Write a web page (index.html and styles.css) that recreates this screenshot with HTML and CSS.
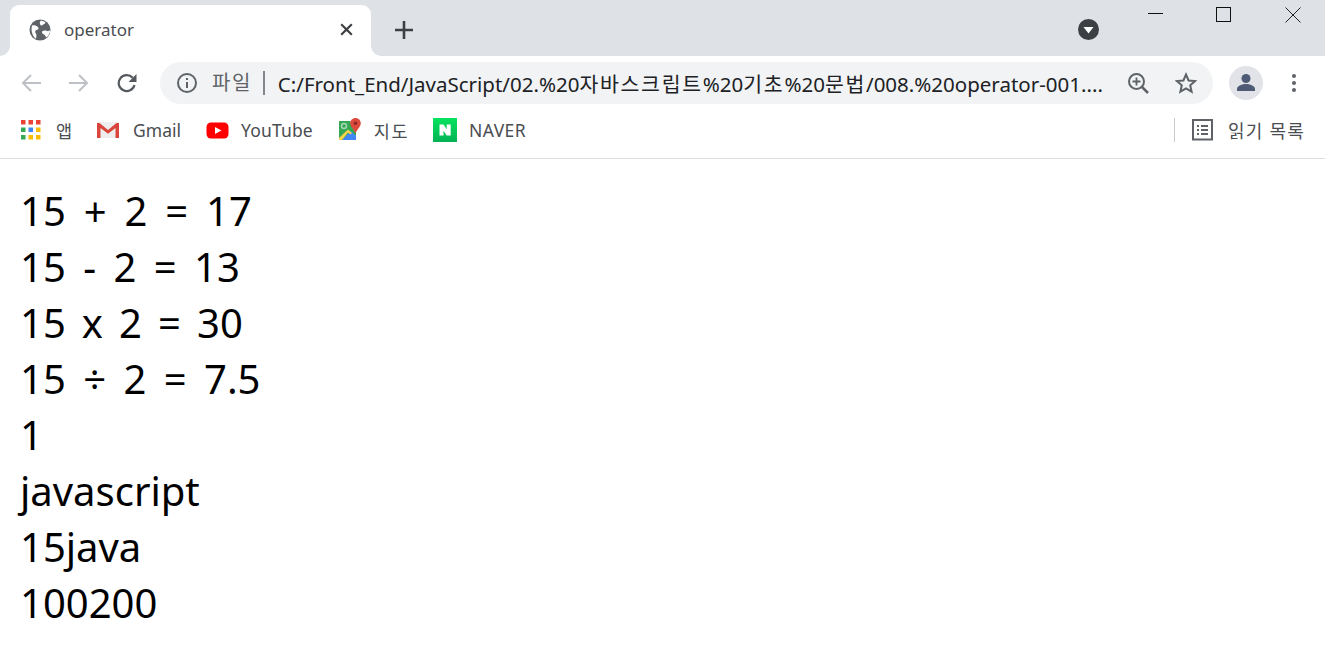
FILE: index.html
```html
<!DOCTYPE html>
<html lang="ko">
<head>
<meta charset="utf-8">
<title>operator</title>
<link rel="stylesheet" href="styles.css">
</head>
<body>
<header class="chrome">
  <div class="tabstrip">
    <div class="tab">
      <svg class="favicon" viewBox="0 0 22 22" width="22" height="22"><circle cx="11" cy="11" r="10.5" fill="#5f6368"/><path d="M3 6.500c2-.5 3.500-.5 4.500.5.800.8 1.600.8 2 2 .3 1-.5 1.500-1.500 1.800-1.500.4-2 1.200-1.700 2.500.2 1 1 1.500 1.200 3l-.5 3.500C4 18 1.500 12 3 6.500zM12 1.500c2 .5 3 1 4.500 2-.5 1.500-2 1.500-3 2.500s-2 .5-2.500-1 0-2.500 1-3.500zM13 12.500c1.500-1.200 3.500-1 5-.5 1 .4 2.500 0 3-1 .3 3-1.500 6-3.500 7.500-1-1-1.500-2.500-2.500-3-1-.4-2.500-1.500-2-3z" fill="#fff"/></svg>
      <span class="tab-title">operator</span>
      <svg class="tab-close" viewBox="0 0 13 13" width="13" height="13"><path d="M1.200 1.200l10.600 10.600M11.800 1.200L1.200 11.800" stroke="#3c4043" stroke-width="2.200" fill="none"/></svg>
    </div>
    <svg class="newtab" viewBox="0 0 18 18" width="18" height="18"><path d="M9 0v18M0 9h18" stroke="#3c4043" stroke-width="2.600" fill="none"/></svg>
    <div class="strip-space"></div>
    <svg class="tabsearch" viewBox="0 0 21 21" width="21" height="21"><circle cx="10.500" cy="10.500" r="10.500" fill="#3c4043"/><path d="M5.500 8h10l-5 6.500z" fill="#fff"/></svg>
    <div class="winctl">
      <svg class="win-min" viewBox="0 0 15 15" width="15" height="15"><path d="M0 6.500h15" stroke="#111" stroke-width="1" fill="none"/></svg>
      <svg class="win-max" viewBox="0 0 15 15" width="15" height="15"><rect x=".5" y=".5" width="14" height="14" stroke="#111" fill="none"/></svg>
      <svg class="win-close" viewBox="0 0 16 16" width="16" height="16"><path d="M.5.500l15 15M15.500.500l-15 15" stroke="#222" stroke-width="1" fill="none"/></svg>
    </div>
  </div>
  <div class="toolbar">
    <svg class="nav nav-back" viewBox="0 0 20 18" width="20" height="18"><path d="M20 9H2M10 1L2 9l8 8" stroke="#bdc1c6" stroke-width="2" fill="none"/></svg>
    <svg class="nav nav-fwd" viewBox="0 0 20 18" width="20" height="18"><path d="M0 9h18M10 1l8 8-8 8" stroke="#bdc1c6" stroke-width="2" fill="none"/></svg>
    <svg class="nav nav-reload" viewBox="0 0 20 20" width="20" height="20"><path d="M17.500 12a8 8 0 1 1-1.800-7.200" stroke="#55585c" stroke-width="2.200" fill="none"/><path d="M19.500 1v8h-8z" fill="#55585c"/></svg>
    <div class="omnibox">
      <svg class="info" viewBox="0 0 20 20" width="20" height="20"><circle cx="10" cy="10" r="9" stroke="#5f6368" stroke-width="2" fill="none"/><path d="M9 9h2v6H9zM9 5h2v2H9z" fill="#5f6368"/></svg>
      <span class="scheme">파일</span>
      <span class="sep"></span>
      <span class="url">C:/Front_End/JavaScript/02.%20<span class="kr">자바스크립트</span>%20<span class="kr">기초</span>%20<span class="kr">문법</span>/008.%20operator-001....</span>
      <svg class="zoom-ic" viewBox="0 0 21 21" width="21" height="21"><circle cx="8.500" cy="8.500" r="7.500" stroke="#5f6368" stroke-width="2" fill="none"/><path d="M14 14l6 6" stroke="#5f6368" stroke-width="2.500"/><path d="M8.500 4.500v8M4.500 8.500h8" stroke="#5f6368" stroke-width="1.800"/></svg>
      <svg class="star" viewBox="0 0 22 22" width="22" height="22"><path d="M11 2.500l2.600 6 6.400.6-4.800 4.200 1.400 6.300L11 16.300l-5.600 3.300 1.400-6.300L2 9.100l6.400-.6z" stroke="#5f6368" stroke-width="2" stroke-linejoin="miter" fill="none"/></svg>
    </div>
    <svg class="avatar" viewBox="0 0 34 34" width="34" height="34"><circle cx="17" cy="17" r="17" fill="#e1e3e8"/><circle cx="17" cy="12.500" r="4.500" fill="#4f5b75"/><path d="M8 25v-2c0-3.500 5.500-5 9-5s9 1.500 9 5v2z" fill="#4f5b75"/></svg>
    <svg class="menu" viewBox="0 0 4 18" width="4" height="18"><circle cx="2" cy="2" r="2" fill="#5f6368"/><circle cx="2" cy="9" r="2" fill="#5f6368"/><circle cx="2" cy="16" r="2" fill="#5f6368"/></svg>
  </div>
  <nav class="bookmarks">
    <a class="bm bm-apps">
      <svg viewBox="0 0 20 20" width="20" height="20"><g><rect x="0" y="0" width="4.500" height="4.500" fill="#ea4335"/><rect x="7.500" y="0" width="4.500" height="4.500" fill="#ea4335"/><rect x="15" y="0" width="4.500" height="4.500" fill="#ea4335"/><rect x="0" y="7.500" width="4.500" height="4.500" fill="#34a853"/><rect x="7.500" y="7.500" width="4.500" height="4.500" fill="#4285f4"/><rect x="15" y="7.500" width="4.500" height="4.500" fill="#fbbc05"/><rect x="0" y="15" width="4.500" height="4.500" fill="#34a853"/><rect x="7.500" y="15" width="4.500" height="4.500" fill="#fbbc05"/><rect x="15" y="15" width="4.500" height="4.500" fill="#fbbc05"/></g></svg>
      <span>앱</span>
    </a>
    <a class="bm bm-gmail">
      <svg viewBox="0 0 24 18" width="24" height="18"><rect x="1" y="1" width="22" height="16" fill="#eeeeee"/><path d="M1 17V2h2.500L12 9l8.500-7H23v15h-3.500V7L12 12.800 4.500 7v10z" fill="#d9453a"/></svg>
      <span>Gmail</span>
    </a>
    <a class="bm bm-yt">
      <svg viewBox="0 0 23 17" width="23" height="17"><rect width="22" height="16" x=".5" y=".5" rx="4.500" fill="#f00"/><path d="M9 5l6.500 3.500L9 12z" fill="#fff"/></svg>
      <span>YouTube</span>
    </a>
    <a class="bm bm-maps">
      <svg viewBox="0 0 22 24" width="22" height="24"><path d="M0 3h17v19H0z" fill="#34a853"/><path d="M11 3h6v12z" fill="#d9dcdc"/><circle cx="5" cy="8" r="2.500" fill="none" stroke="#a8d5b5" stroke-width="1.500"/><path d="M3 22l9-9 5 5v4z" fill="#4285f4"/><path d="M0 22v-2l9-8.500 4 3.500-1.500 1.500L9 14.500 3 22z" fill="#fbd34a"/><path d="M16.500 0c3 0 5.300 2.300 5.300 5.200 0 3.300-3.300 5.300-5.300 10.300-2-5-5.300-7-5.300-10.300 0-2.900 2.300-5.200 5.300-5.200z" fill="#dd4b3e"/><circle cx="16.500" cy="5.200" r="1.800" fill="#8d2a22"/></svg>
      <span>지도</span>
    </a>
    <a class="bm bm-naver">
      <svg viewBox="0 0 24 24" width="24" height="24"><defs><linearGradient id="ng" x1="0" y1="0" x2="0" y2="1"><stop offset="0" stop-color="#06e35f"/><stop offset="1" stop-color="#02b354"/></linearGradient></defs><rect width="24" height="24" fill="url(#ng)"/><path d="M6.500 6.500h4l3.200 4.800V6.500h4v11h-4l-3.200-4.800v4.800h-4z" fill="#fff"/></svg>
      <span>NAVER</span>
    </a>
    <div class="bm-space"></div>
    <span class="bm-sep"></span>
    <a class="bm bm-reading">
      <svg viewBox="0 0 22 22" width="22" height="22"><rect x="1" y="1" width="19" height="19.500" stroke="#5f6368" stroke-width="2" fill="none"/><path d="M5 6h2v2H5zM9 6h7v2H9zM5 10h2v2H5zM9 10h7v2H9zM5 14h2v2H5zM9 14h7v2H9z" fill="#5f6368"/></svg>
      <span>읽기 목록</span>
    </a>
  </nav>
</header>
<main class="output">
  <div class="line ws-plus">15 + 2 = 17</div>
  <div class="line ws-minus">15 - 2 = 13</div>
  <div class="line ws-times">15 x 2 = 30</div>
  <div class="line ws-div">15 ÷ 2 = 7.5</div>
  <div class="line">1</div>
  <div class="line">javascript</div>
  <div class="line">15java</div>
  <div class="line">100200</div>
</main>
</body>
</html>
```
FILE: styles.css
```css
* { box-sizing: border-box; }
html, body { margin: 0; padding: 0; background: #fff; overflow: hidden; }
body { font-family: "Noto Sans", "Noto Sans CJK KR", sans-serif; height: 668px; }
svg { display: block; flex: none; }

.chrome { height: 159px; border-bottom: 1px solid #dadce0; }

.tabstrip { height: 56px; background: #dee1e6; display: flex; align-items: flex-start; padding-left: 10px; }
.tab { position: relative; width: 361px; height: 51px; margin-top: 5px; background: #fff; border-radius: 9px 9px 0 0; display: flex; align-items: center; padding: 0 18px 2px 19px; }
.tab::before, .tab::after { content: ""; position: absolute; bottom: 0; width: 10px; height: 10px; background: radial-gradient(circle at var(--cx) 0, #dee1e6 9.500px, #fff 10px); }
.tab::before { left: -10px; --cx: 0; }
.tab::after { right: -10px; --cx: 100%; }
.favicon { margin-right: 13px; }
.tab-title { flex: 1; font-size: 17px; color: #4a4d51; }
.newtab { margin: 21px 0 0 24px; }
.strip-space { flex: 1; }
.tabsearch { margin-top: 19px; }
.winctl { display: flex; margin-left: 49px; width: 177px; padding-top: 7px; }
.win-min { margin-right: 53px; }
.win-max { margin-right: 54px; }

.toolbar { height: 54px; display: flex; align-items: center; padding-left: 21px; }
.nav-fwd { margin-left: 28px; }
.nav-reload { margin-left: 28px; }
.omnibox { width: 1053px; height: 42px; margin: 0 0 0 23px; background: #f1f3f4; border-radius: 21px; display: flex; align-items: center; padding-left: 17px; }
.scheme { margin-left: 15px; font-size: 20px; letter-spacing: 1.500px; color: #5f6368; line-height: 1; white-space: nowrap; }
.sep { width: 2px; height: 24px; background: #80868b; margin: 0 13px 0 11px; }
.url { width: 840px; font-size: 20.500px; color: #202124; white-space: nowrap; overflow: hidden; }
.kr { letter-spacing: 1.700px; }
.zoom-ic { margin-left: 10px; }
.star { margin-left: 26px; }
.avatar { margin-left: 16px; }
.menu { margin-left: 29px; }

.bookmarks { height: 48px; display: flex; align-items: center; padding: 0 20px 8px 21px; }
.bm { display: flex; align-items: center; font-size: 17.500px; color: #4a4d51; }
.bm span { white-space: nowrap; }
.bm-apps span { margin-left: 15px; }
.bm-gmail { margin-left: 24px; }
.bm-gmail span { margin-left: 13px; }
.bm-yt { margin-left: 25px; }
.bm-yt span { margin-left: 12px; letter-spacing: .15px; }
.bm-maps { margin-left: 26px; }
.bm-maps span { margin-left: 13px; letter-spacing: 1.500px; }
.bm-naver { margin-left: 24px; }
.bm-naver span { margin-left: 12px; letter-spacing: .4px; }
.bm-space { flex: 1; }
.bm-sep { width: 1px; height: 24px; background: #c8cacd; margin-right: 17px; }
.bm-reading span { margin-left: 14px; font-size: 18px; letter-spacing: 1.200px; }

.output { padding: 24px 0 0 20px; font-size: 40px; line-height: 56px; color: #000; }
.line { height: 56px; white-space: nowrap; }
.ws-plus { word-spacing: 7.500px; }
.ws-minus { word-spacing: 7px; }
.ws-times { word-spacing: 5.700px; }
.ws-div { word-spacing: 7px; }
```
